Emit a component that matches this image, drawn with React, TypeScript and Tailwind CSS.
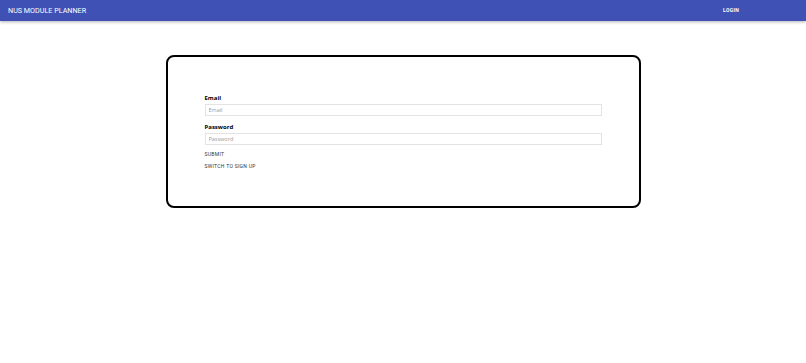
import React from 'react';

export default function App() {
  return (
    <div className="min-h-[363px] bg-white font-['Roboto',sans-serif]">
      {/* App bar */}
      <header className="h-[21px] bg-[#3f51b5] shadow-[0_1px_3px_rgba(0,0,0,0.3)] flex items-center justify-between pl-[8px] pr-[67px]">
        <span className="text-white text-[7.2px] leading-none">NUS MODULE PLANNER</span>
        <button className="text-white text-[5px] font-bold tracking-[0.3px] leading-none">LOGIN</button>
      </header>

      {/* Login card */}
      <div className="w-[475px] mx-auto mt-[34px] border-2 border-black rounded-[8px] px-[37px] pt-[37px] pb-[36px]">
        <div className="flex flex-col font-['Open_Sans',sans-serif]">
          <label className="text-[6px] font-bold leading-[8px] text-black">Email</label>
          <input
            placeholder="Email"
            className="mt-[2px] h-[12px] w-full border border-[#e3e3e3] px-[3px] text-[5.5px] placeholder:text-[#9a9a9a] outline-none"
          />
          <label className="mt-[7px] text-[6px] font-bold leading-[8px] text-black">Password</label>
          <input
            placeholder="Password"
            type="password"
            className="mt-[2px] h-[12px] w-full border border-[#e3e3e3] px-[3px] text-[5.5px] placeholder:text-[#9a9a9a] outline-none"
          />
          <button className="mt-[5px] self-start text-[5px] leading-[8px] tracking-[0.3px] text-[#333] font-['Roboto',sans-serif]">SUBMIT</button>
          <button className="mt-[4px] self-start text-[5px] leading-[8px] tracking-[0.3px] text-[#333] font-['Roboto',sans-serif]">SWITCH TO SIGN UP</button>
        </div>
      </div>
    </div>
  );
}
